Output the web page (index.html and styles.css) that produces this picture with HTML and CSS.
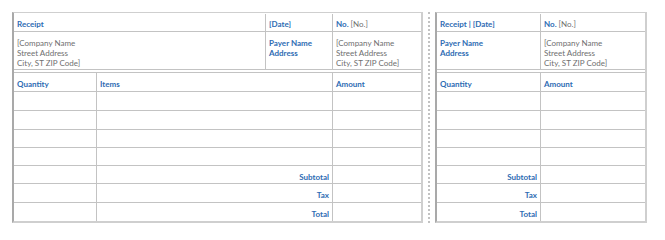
FILE: index.html
```html
<!DOCTYPE html>
<html>
<head>
<meta charset="utf-8">
<link rel="stylesheet" href="styles.css">
</head>
<body>
<div class="page">
  <div class="receipt main">
    <div class="top grid-main-top">
      <div class="cell span2 head"><span class="lbl">Receipt</span></div>
      <div class="cell head"><span class="lbl">[Date]</span></div>
      <div class="cell head"><span class="lbl">No.</span> <span class="val">[No.]</span></div>
      <div class="cell span2 addr val">[Company Name<br>Street Address<br>City, ST ZIP Code]</div>
      <div class="cell addr lbl">Payer Name<br>Address</div>
      <div class="cell addr val">[Company Name<br>Street Address<br>City, ST ZIP Code]</div>
    </div>
    <div class="items grid-main-items">
      <div class="cell ih lbl">Quantity</div>
      <div class="cell ih lbl">Items</div>
      <div class="cell ih lbl">Amount</div>
      <div class="cell"></div><div class="cell"></div><div class="cell"></div>
      <div class="cell"></div><div class="cell"></div><div class="cell"></div>
      <div class="cell"></div><div class="cell"></div><div class="cell"></div>
      <div class="cell"></div><div class="cell"></div><div class="cell"></div>
      <div class="cell"></div><div class="cell tot lbl">Subtotal</div><div class="cell"></div>
      <div class="cell"></div><div class="cell tot lbl">Tax</div><div class="cell"></div>
      <div class="cell"></div><div class="cell tot lbl">Total</div><div class="cell"></div>
    </div>
  </div>
  <div class="sep"></div>
  <div class="receipt stub">
    <div class="top grid-stub-top">
      <div class="cell head"><span class="lbl">Receipt | [Date]</span></div>
      <div class="cell head"><span class="lbl">No.</span> <span class="val">[No.]</span></div>
      <div class="cell addr lbl">Payer Name<br>Address</div>
      <div class="cell addr val">[Company Name<br>Street Address<br>City, ST ZIP Code]</div>
    </div>
    <div class="items grid-stub-items">
      <div class="cell ih lbl">Quantity</div>
      <div class="cell ih lbl">Amount</div>
      <div class="cell"></div><div class="cell"></div>
      <div class="cell"></div><div class="cell"></div>
      <div class="cell"></div><div class="cell"></div>
      <div class="cell"></div><div class="cell"></div>
      <div class="cell tot lbl">Subtotal</div><div class="cell"></div>
      <div class="cell tot lbl">Tax</div><div class="cell"></div>
      <div class="cell tot lbl">Total</div><div class="cell"></div>
    </div>
  </div>
</div>
</body>
</html>
```
FILE: styles.css
```css
html, body {
  margin: 0;
  padding: 0;
  background: #ffffff;
}
body {
  font-family: Lato, "Liberation Sans", Arial, sans-serif;
  font-size: 8px;
  line-height: 10px;
}
.page {
  display: flex;
  align-items: flex-start;
  padding: 12px 0 0 12px;
}
.receipt {
  border: 2px solid #cfcfcf;
  border-left-color: #a9a9a9;
  border-top-width: 1px;
  box-sizing: border-box;
  background: #ffffff;
}
.main { width: 411px; }
.stub { width: 212px; }
.sep {
  width: 0;
  height: 211px;
  margin: 0 5px 0 5px;
  border-left: 2px dotted #c2c2c2;
}
.top, .items {
  display: grid;
  gap: 1px;
  background: #c3c3c3;
}
.top {
  border-top: 1px solid #ffffff;
  border-bottom: 1px solid #c3c3c3;
  grid-template-rows: 17px 37px;
  margin-bottom: 2px;
}
.items {
  border-top: 1px solid #c3c3c3;
  grid-template-rows: 18px 18px 18px 17px 17px 17px 18px 18px;
}
.grid-main-top { grid-template-columns: 82px 168px 66px 1fr; }
.grid-main-items { grid-template-columns: 82px 235px 1fr; }
.grid-stub-top, .grid-stub-items { grid-template-columns: 103px 1fr; }
.cell {
  background: #ffffff;
  padding: 0 3px 0 3px;
  white-space: nowrap;
  overflow: hidden;
}
.span2 { grid-column: span 2; }
.head { padding-top: 5px; }
.addr { padding-top: 6px; }
.ih { padding-top: 6px; }
.tot { padding-top: 6px; text-align: right; }
.lbl {
  color: #2e6cb3;
  font-weight: bold;
}
.val {
  color: #6f6f6f;
  font-weight: normal;
}
```
